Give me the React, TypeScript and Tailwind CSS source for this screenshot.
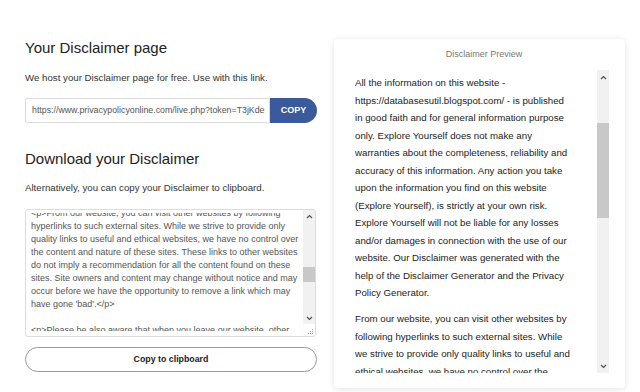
const areaLines = [
  '<p>From our website, you can visit other websites by following',
  'hyperlinks to such external sites. While we strive to provide only',
  'quality links to useful and ethical websites, we have no control over',
  'the content and nature of these sites. These links to other websites',
  'do not imply a recommendation for all the content found on these',
  'sites. Site owners and content may change without notice and may',
  'occur before we have the opportunity to remove a link which may',
  "have gone 'bad'.</p>",
  '\u00a0',
  '<p>Please be also aware that when you leave our website, other',
];

const previewParagraphs = [
  [
    'All the information on this website -',
    'https://databasesutil.blogspot.com/ - is published',
    'in good faith and for general information purpose',
    'only. Explore Yourself does not make any',
    'warranties about the completeness, reliability and',
    'accuracy of this information. Any action you take',
    'upon the information you find on this website',
    '(Explore Yourself), is strictly at your own risk.',
    'Explore Yourself will not be liable for any losses',
    'and/or damages in connection with the use of our',
    'website. Our Disclaimer was generated with the',
    'help of the Disclaimer Generator and the Privacy',
    'Policy Generator.',
  ],
  [
    'From our website, you can visit other websites by',
    'following hyperlinks to such external sites. While',
    'we strive to provide only quality links to useful and',
    'ethical websites, we have no control over the',
    'content and nature of these sites.',
  ],
];

function Chevron({ up }: { up?: boolean }) {
  return (
    <svg width="7" height="5" viewBox="0 0 7 5">
      <polyline
        points={up ? '1,4 3.5,1.5 6,4' : '1,1 3.5,3.5 6,1'}
        fill="none"
        stroke="#505050"
        strokeWidth="1.2"
      />
    </svg>
  );
}

export default function App() {
  return (
    <div className="w-[640px] h-[392px] bg-white flex font-['Liberation_Sans',Arial,sans-serif] overflow-hidden">
      {/* left column */}
      <div className="w-[317px] pl-[25px] pt-[39px] flex flex-col">
        <h2 className="text-[15px] leading-[18px] text-[#222]">Your Disclaimer page</h2>
        <p className="mt-[14px] text-[9.7px] leading-[14px] text-[#333]">
          We host your Disclaimer page for free. Use with this link.
        </p>
        <div className="mt-[13px] flex h-[25px]">
          <div className="flex-1 min-w-0 border border-[#dcdcdc] rounded-l-[2px] flex items-center pl-[6px] pr-[4px]">
            <span className="block w-full overflow-hidden text-[8.8px] text-[#555] whitespace-nowrap">
              https://www.privacypolicyonline.com/live.php?token=T3jKdeE
            </span>
          </div>
          <button className="w-[47px] bg-[#3a5a9c] rounded-r-[13px] text-white text-[9px] font-bold flex items-center justify-center">
            COPY
          </button>
        </div>

        <h2 className="mt-[27px] text-[15px] leading-[18px] text-[#222]">Download your Disclaimer</h2>
        <p className="mt-[13px] text-[9.7px] leading-[14px] text-[#333]">
          Alternatively, you can copy your Disclaimer to clipboard.
        </p>

        {/* textarea */}
        <div className="mt-[14px] h-[128px] w-[291px] border border-[#dcdcdc] rounded-[3px] flex overflow-hidden">
          <div className="flex-1 min-w-0 pt-[3px] pb-[5px] pl-[5px] flex">
            <div className="flex-1 overflow-hidden">
              <div className="-mt-[6px]">
                {areaLines.map((l, i) => (
                  <div key={i} className="text-[9px] leading-[13px] text-[#555] whitespace-nowrap">
                    {l}
                  </div>
                ))}
              </div>
            </div>
          </div>
          <div className="w-[12px] flex flex-col">
            <div className="h-[114px] bg-[#f1f1f1] flex flex-col">
              <div className="h-[12px] flex items-center justify-center">
                <Chevron up />
              </div>
              <div className="h-[45px]" />
              <div className="h-[15px] bg-[#c8c8c8]" />
              <div className="flex-1" />
              <div className="h-[12px] flex items-center justify-center">
                <Chevron />
              </div>
            </div>
            <div className="flex-1 flex items-end justify-end pr-[1px] pb-[1px]">
              <svg width="6" height="6" viewBox="0 0 6 6">
                <rect x="4" y="0" width="1" height="1" fill="#999" />
                <rect x="2" y="2" width="1" height="1" fill="#999" />
                <rect x="4" y="2" width="1" height="1" fill="#999" />
                <rect x="0" y="4" width="1" height="1" fill="#999" />
                <rect x="2" y="4" width="1" height="1" fill="#999" />
                <rect x="4" y="4" width="1" height="1" fill="#999" />
              </svg>
            </div>
          </div>
        </div>

        <button className="mt-[10px] h-[25px] w-[292px] rounded-full border border-[#9a9a9a] bg-white text-[8.8px] font-bold text-[#222]">
          Copy to clipboard
        </button>
      </div>

      {/* preview card */}
      <div className="ml-[17px] mt-[39px] w-[291px] h-[349px] bg-white rounded-[4px] shadow-[0_1px_6px_rgba(0,0,0,0.12)] flex flex-col pt-[9px] pl-[21px] pr-[16px]">
        <p className="text-[9px] leading-[12px] text-[#777] text-center pl-[4px]">Disclaimer Preview</p>
        <div className="mt-[10px] h-[303px] flex">
          <div className="flex-1 overflow-hidden pt-[4px]">
            {previewParagraphs.map((p, i) => (
              <p key={i} className={i > 0 ? 'mt-[8.5px]' : ''}>
                {p.map((l, j) => (
                  <span key={j} className="block text-[9.7px] leading-[17.5px] text-[#222] whitespace-nowrap">
                    {l}
                  </span>
                ))}
              </p>
            ))}
          </div>
          <div className="w-[12px] bg-[#f1f1f1] flex flex-col">
            <div className="h-[14px] flex items-center justify-center">
              <Chevron up />
            </div>
            <div className="h-[39px]" />
            <div className="h-[95px] bg-[#c8c8c8]" />
            <div className="flex-1" />
            <div className="h-[14px] flex items-center justify-center">
              <Chevron />
            </div>
          </div>
        </div>
      </div>
    </div>
  );
}
